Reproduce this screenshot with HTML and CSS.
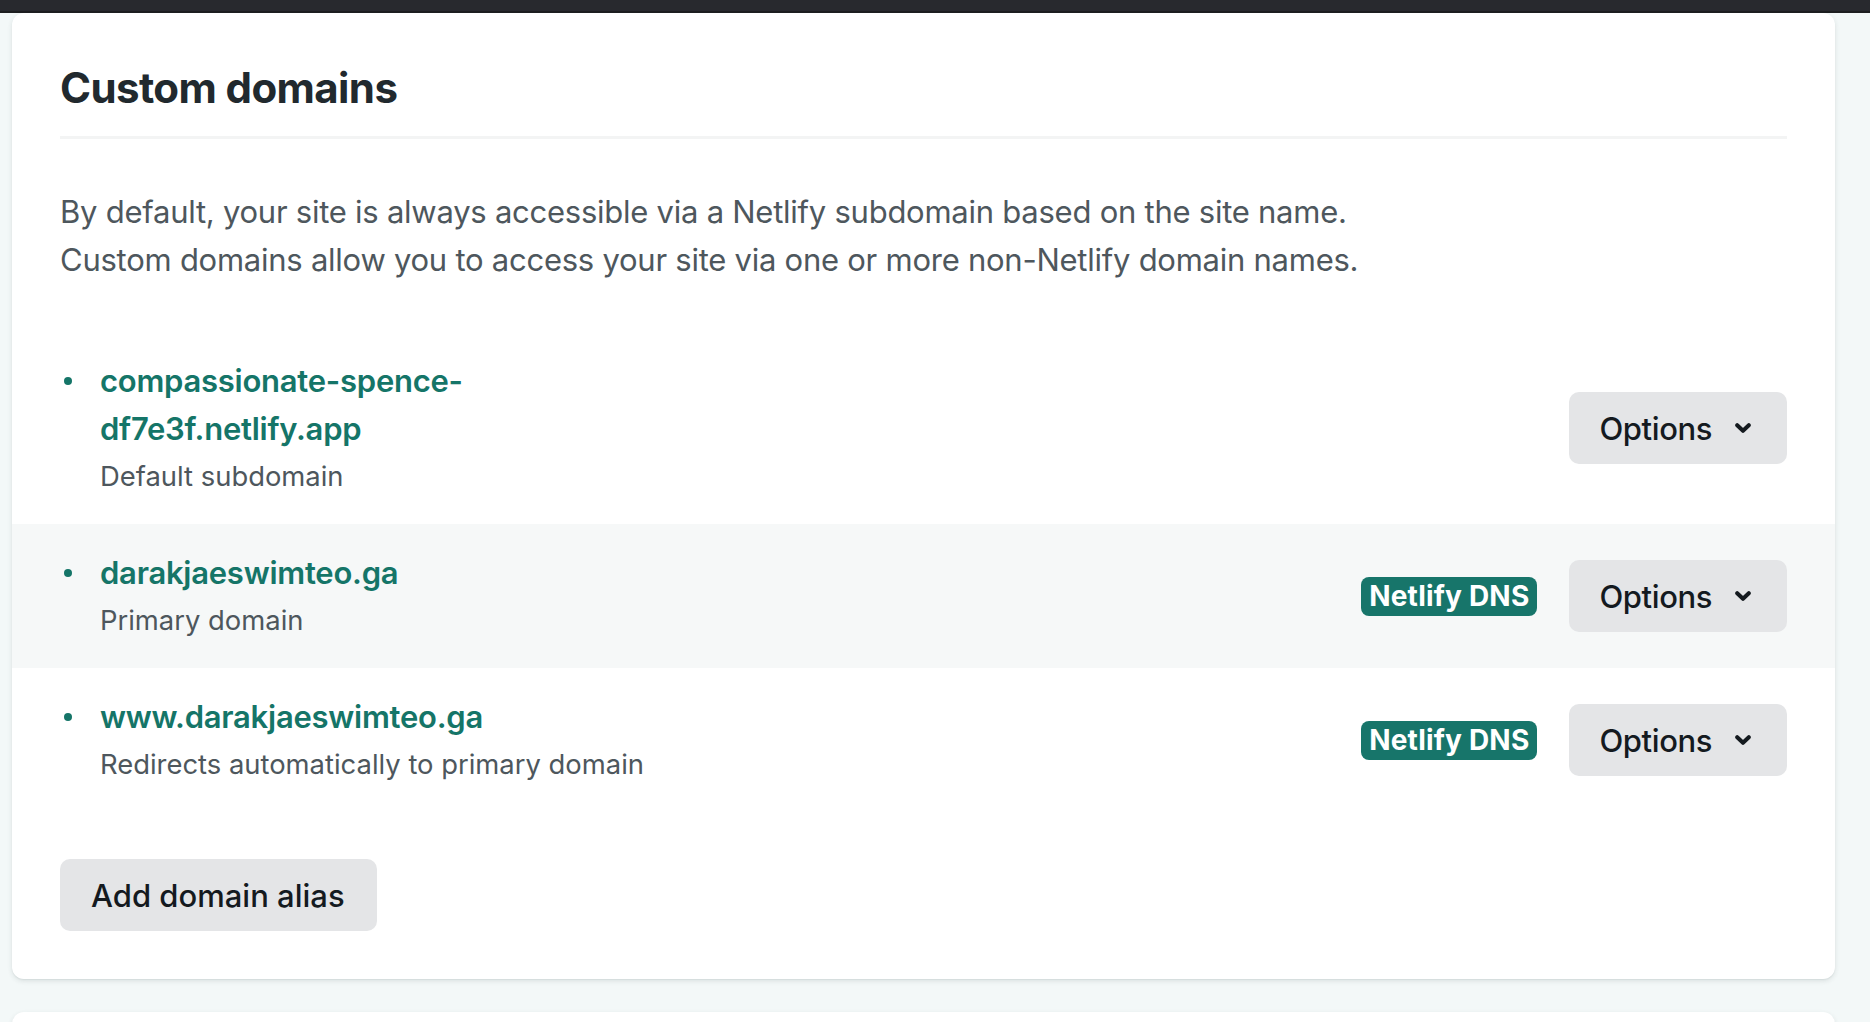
FILE: index.html
```html
<!DOCTYPE html>
<html lang="en">
<head>
<meta charset="utf-8">
<title>Custom domains</title>
<link rel="stylesheet" href="styles.css">
</head>
<body>
<div class="topbar"></div>
<main class="page">
  <section class="card">
    <h2 class="card-title">Custom domains</h2>
    <p class="intro">By default, your site is always accessible via a Netlify subdomain based on the site name.<br>Custom domains allow you to access your site via one or more non-Netlify domain names.</p>
    <ul class="domain-list">
      <li class="domain-row">
        <div class="domain-info">
          <a class="domain-link" href="#">compassionate-spence-df7e3f.netlify.app</a>
          <div class="domain-note">Default subdomain</div>
        </div>
        <div class="domain-actions">
          <button class="btn btn-options">Options<svg class="chev" viewBox="0 0 16 10" width="16" height="10"><path d="M2.2 2.2 L8 7.8 L13.8 2.2" /></svg></button>
        </div>
      </li>
      <li class="domain-row domain-row--primary">
        <div class="domain-info">
          <a class="domain-link" href="#">darakjaeswimteo.ga</a>
          <div class="domain-note">Primary domain</div>
        </div>
        <div class="domain-actions">
          <span class="badge">Netlify DNS</span>
          <button class="btn btn-options">Options<svg class="chev" viewBox="0 0 16 10" width="16" height="10"><path d="M2.2 2.2 L8 7.8 L13.8 2.2" /></svg></button>
        </div>
      </li>
      <li class="domain-row">
        <div class="domain-info">
          <a class="domain-link" href="#">www.darakjaeswimteo.ga</a>
          <div class="domain-note">Redirects automatically to primary domain</div>
        </div>
        <div class="domain-actions">
          <span class="badge">Netlify DNS</span>
          <button class="btn btn-options">Options<svg class="chev" viewBox="0 0 16 10" width="16" height="10"><path d="M2.2 2.2 L8 7.8 L13.8 2.2" /></svg></button>
        </div>
      </li>
    </ul>
    <button class="btn btn-add">Add domain alias</button>
  </section>
  <section class="card card-next"></section>
</main>
</body>
</html>
```

FILE: styles.css
```css
* { box-sizing: border-box; }

html, body {
  margin: 0;
  padding: 0;
}

body {
  background: #f3f8f8;
  font-family: Inter, "Noto Sans", "Liberation Sans", sans-serif;
  color: #21292e;
  overflow: hidden;
}

.topbar {
  height: 13px;
  background: #28292e;
  border-bottom: 2px solid #1d1e20;
}

.page {
  padding: 0 35px 0 12px;
}

.card {
  background: #ffffff;
  border-radius: 12px;
  box-shadow: 0 2px 5px rgba(40, 60, 60, 0.12), 0 1px 1px rgba(40, 60, 60, 0.06);
  padding: 49px 48px 48px;
}

.card-next {
  margin-top: 33px;
  height: 200px;
}

.card-title {
  margin: 0;
  font-size: 42px;
  line-height: 52px;
  font-weight: 700;
  letter-spacing: -0.6px;
  color: #21292e;
  padding-bottom: 22px;
  border-bottom: 3px solid #f3f4f4;
}

.intro {
  margin: 49px 0 0;
  font-size: 31px;
  line-height: 48px;
  color: #4e575d;
  letter-spacing: -0.25px;
}

.domain-list {
  list-style: none;
  margin: 48px -48px 0;
  padding: 0;
}

.domain-row {
  display: flex;
  align-items: center;
  justify-content: space-between;
  padding: 25px 48px;
}

.domain-row--primary {
  background: #f6f8f8;
}

.domain-info {
  position: relative;
  padding-left: 40px;
  max-width: 620px;
}

.domain-info::before {
  content: "";
  position: absolute;
  left: 4px;
  top: 20px;
  width: 8px;
  height: 8px;
  border-radius: 50%;
  background: #157568;
}

.domain-link {
  display: block;
  font-size: 31px;
  line-height: 48px;
  font-weight: 600;
  color: #157568;
  text-decoration: none;
  letter-spacing: -0.25px;
}

.domain-note {
  font-size: 27.4px;
  line-height: 46px;
  color: #4e575d;
}

.domain-actions {
  display: flex;
  align-items: center;
  gap: 32px;
}

.badge {
  display: inline-block;
  background: #17756a;
  color: #ffffff;
  font-weight: 700;
  font-size: 28px;
  line-height: 39px;
  padding: 0 8px;
  border-radius: 8px;
  letter-spacing: 0.2px;
}

.btn {
  font-family: inherit;
  border: none;
  background: #e4e5e7;
  color: #141a1f;
  border-radius: 10px;
  font-weight: 500;
  cursor: pointer;
}

.btn-options {
  display: flex;
  align-items: center;
  gap: 23px;
  height: 72px;
  padding: 0 36px 0 30px;
  font-size: 31px;
  letter-spacing: -0.4px;
}

.chev {
  display: block;
  fill: none;
  stroke: #141a1f;
  stroke-width: 4;
  stroke-linecap: round;
  stroke-linejoin: round;
}

.btn-add {
  display: block;
  margin-top: 47px;
  height: 72px;
  padding: 0 32px 0 31px;
  font-size: 31px;
}
```
